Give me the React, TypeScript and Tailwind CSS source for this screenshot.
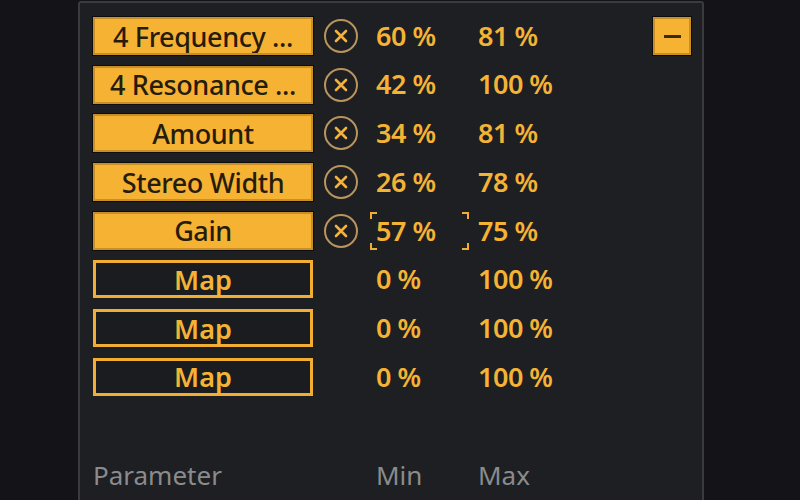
import React from "react";

const rows = [
  { label: "4 Frequency ...", min: "60 %", max: "81 %", mapped: true },
  { label: "4 Resonance ...", min: "42 %", max: "100 %", mapped: true },
  { label: "Amount", min: "34 %", max: "81 %", mapped: true },
  { label: "Stereo Width", min: "26 %", max: "78 %", mapped: true },
  { label: "Gain", min: "57 %", max: "75 %", mapped: true, focused: true },
  { label: "Map", min: "0 %", max: "100 %", mapped: false },
  { label: "Map", min: "0 %", max: "100 %", mapped: false },
  { label: "Map", min: "0 %", max: "100 %", mapped: false },
];

function ClearIcon() {
  return (
    <svg width="36" height="36" viewBox="0 0 36 36">
      <circle cx="18" cy="18" r="16" fill="none" stroke="#b8955c" strokeWidth="2" />
      <path d="M13 13 L23 23 M23 13 L13 23" stroke="#f2b23c" strokeWidth="2.6" strokeLinecap="round" />
    </svg>
  );
}

function Corners() {
  return (
    <>
      <span className="absolute left-0 top-0 w-[7px] h-[7px] border-l-2 border-t-2 border-[#f2ae33]" />
      <span className="absolute right-0 top-0 w-[7px] h-[7px] border-r-2 border-t-2 border-[#f2ae33]" />
      <span className="absolute left-0 bottom-0 w-[7px] h-[7px] border-l-2 border-b-2 border-[#f2ae33]" />
      <span className="absolute right-0 bottom-0 w-[7px] h-[7px] border-r-2 border-b-2 border-[#f2ae33]" />
    </>
  );
}

export default function App() {
  return (
    <div
      className="w-[800px] h-[500px] bg-[#131318] overflow-hidden flex"
      style={{ fontFamily: "'Noto Sans', 'Open Sans', sans-serif" }}
    >
      {/* Mapping panel */}
      <div className="ml-[78px] mt-[1px] w-[626px] h-[499px] bg-[#1e1f22] border-l-2 border-t-2 border-r-2 border-[#3a3b3f] rounded-tl-[3px] rounded-tr-[3px] flex flex-col pl-[13px] pr-[11px] pt-[14px]">
        <div className="flex flex-col gap-[10.7px]">
          {rows.map((r, i) => (
            <div key={i} className="flex items-center h-[38px]">
              {r.mapped ? (
                <div className="w-[220px] h-[38px] bg-[#f6b233] border-2 border-[#c98f27] shadow-[0_0_0_1px_#0d0d0d] flex items-center justify-center text-[27px] font-medium text-[#261c0c] tracking-[-0.4px] leading-none whitespace-nowrap overflow-hidden">
                  {r.label}
                </div>
              ) : (
                <div className="w-[220px] h-[38px] bg-[#1b1c1f] border-[3px] border-[#f2ae33] flex items-center justify-center text-[27px] font-semibold text-[#f5b335] leading-none">
                  {r.label}
                </div>
              )}
              <div className="w-[36px] ml-[10px] flex items-center justify-center">
                {r.mapped && <ClearIcon />}
              </div>
              <div className="relative w-[99px] h-[38px] ml-[11px] pl-[6px] flex items-center text-[27px] font-semibold text-[#f5b335] tracking-[-0.5px]">
                {r.focused && <Corners />}
                {r.min}
              </div>
              <div className="pl-[9px] text-[27px] font-semibold text-[#f5b335] tracking-[-0.5px]">{r.max}</div>
              {i === 0 && (
                <div className="ml-auto w-[38px] h-[38px] bg-[#f6b233] border-2 border-[#c98f27] shadow-[0_0_0_1px_#0d0d0d] flex items-center justify-center">
                  <span className="w-[17px] h-[3px] bg-[#3a2a10]" />
                </div>
              )}
            </div>
          ))}
        </div>
        <div className="flex-1" />
        <div className="flex items-center h-[30px] mb-[10px] text-[26px] text-[#8a8b8d]">
          <span className="w-[283px]">Parameter</span>
          <span className="w-[102px]">Min</span>
          <span>Max</span>
        </div>
      </div>
    </div>
  );
}
